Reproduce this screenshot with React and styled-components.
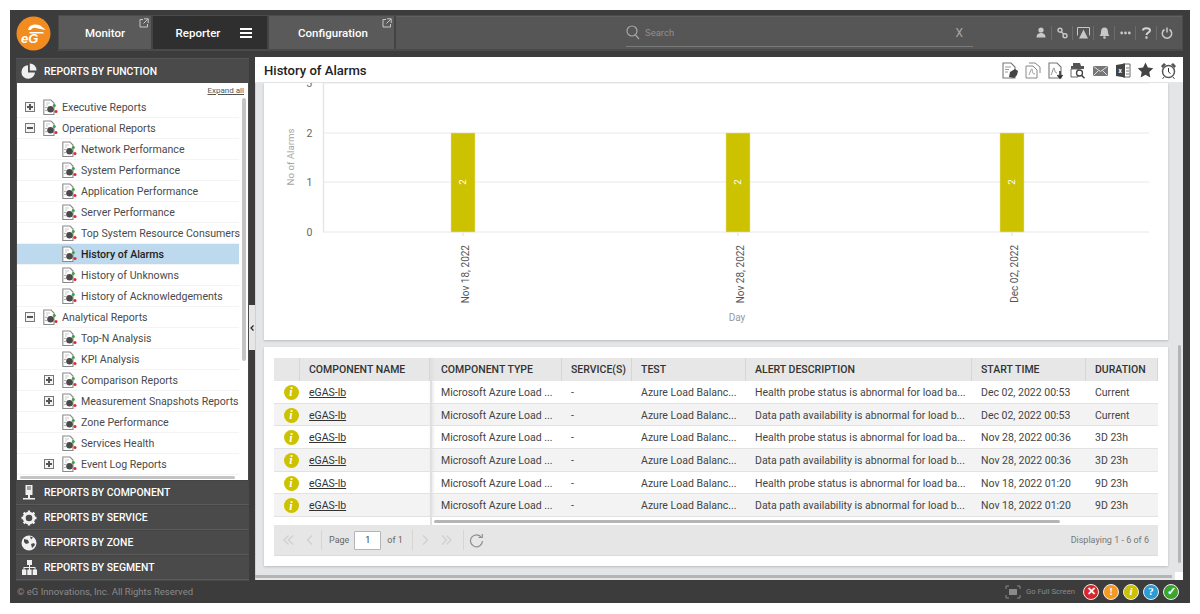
import React from 'react';
import styled, { createGlobalStyle } from 'styled-components';

const Global = createGlobalStyle`
  html, body { margin: 0; padding: 0; background: #fff; }
  body { font-family: Roboto, "Liberation Sans", sans-serif; }
  * { box-sizing: border-box; }
`;

const Page = styled.div`
  width: 1200px; height: 614px; padding: 10px 10px 11px; background: #fff; overflow: hidden;
`;
const Frame = styled.div`
  width: 1180px; height: 593px; background: #3c3c3c; display: flex; flex-direction: column;
  padding: 5px 7px 0 6px;
`;
const TopRow = styled.header`
  height: 36px; display: flex; align-items: center; flex: none;
`;
const LogoWrap = styled.div`
  width: 42px; flex: none; display: flex; align-items: center; margin-top: 1px;
  svg { display: block; }
`;
const NavBar = styled.nav`
  flex: 1; height: 36px; background: #565656; display: flex; align-items: stretch;
  border: 1px solid #4b4b4b; border-bottom: 2px solid #4a4a4a; box-shadow: inset 0 1px 0 #606060;
`;
const Tab = styled.div`
  position: relative; width: ${p => p.$w}px; display: flex; align-items: center; justify-content: center;
  gap: 20px; color: #fff; font-size: 11.5px; font-weight: 500; padding-left: ${p => p.$pl || 0}px;
  background: ${p => p.$active ? '#2f2f2f' : '#5a5a5a'};
  border-right: 2px solid #444;
`;
const ExtIcon = styled.span`
  position: absolute; top: 2px; right: 2px; line-height: 0;
`;
const SearchBox = styled.div`
  width: 347px; height: 26px; margin: 5px 0 0 230px; border-bottom: 1px solid #7a7a7a;
  display: flex; align-items: center; padding: 0 10px 2px 0; color: #9a9a9a;
`;
const SearchText = styled.span`
  flex: 1; font-size: 9.5px; color: #8f8f8f; padding-left: 5px;
`;
const SearchClear = styled.span`
  font-size: 12px; color: #a8a8a8;
`;
const TopIcons = styled.div`
  margin-left: auto; display: flex; align-items: center; padding-right: 5px;
`;
const TopIcon = styled.span`
  width: 21px; height: 14px; display: flex; align-items: center; justify-content: center;
  border-left: ${p => p.$first ? 'none' : '1px solid #6c6c6c'};
`;
const Body = styled.div`
  flex: 1; min-height: 0; display: flex; padding-top: 7px;
`;
const Side = styled.aside`
  width: 233px; flex: none; display: flex; flex-direction: column; height: 523px; background: #4a4a4a;
`;
const SideHead = styled.div`
  height: 25px; flex: none; display: flex; align-items: center; padding-left: 5px; gap: 7px;
  color: #fff; font-size: 10.4px; font-weight: 500; background: #4a4a4a;
  border-top: 1px solid #555; white-space: nowrap;
  svg { flex: none; }
`;
const Tree = styled.div`
  height: 397px; flex: none; margin: 0 1px; background: #fff; position: relative; overflow: hidden;
  padding-top: 14px;
`;
const ExpandAll = styled.a`
  position: absolute; right: 4px; top: 3px; font-size: 8px; color: #555; text-decoration: underline;
`;
const Row = styled.div`
  height: 21px; width: 222px; display: flex; align-items: center; position: relative;
  padding-left: ${p => p.$level === 0 ? 26 : 45}px; gap: 4px;
  font-size: 10.6px; white-space: nowrap; font-weight: ${p => p.$sel ? 500 : 400};
  color: ${p => p.$sel ? '#222' : '#4a4a4a'};
  background: ${p => p.$sel ? '#bcd9ee' : '#fff'};
  border-bottom: 1px solid #f4f4f4;
`;
const Toggle = styled.span`
  position: absolute; left: ${p => p.$level === 0 ? 8 : 27}px; top: 5px; width: 10px; height: 10px;
  border: 1px solid #777; background: #f4f4f4; line-height: 0;
  &::before { content: ''; position: absolute; left: 1px; right: 1px; top: 3px; height: 2px; background: #555; }
  &::after { content: ''; display: ${p => p.$open ? 'none' : 'block'}; position: absolute; top: 1px; bottom: 1px; left: 3px; width: 2px; background: #555; }
`;
const VScroll = styled.div`
  position: absolute; left: 225px; top: 15px; width: 4px; height: 263px; background: #c4c4c4; border-radius: 2px;
`;
const HScroll = styled.div`
  position: absolute; left: 3px; bottom: 1px; width: 215px; height: 3px; background: #c4c4c4; border-radius: 2px;
`;
const Acc = styled.div`
  height: 25px; flex: none; display: flex; align-items: center; padding-left: 5px; gap: 7px;
  color: #fff; font-size: 10.4px; font-weight: 500; background: #4a4a4a; white-space: nowrap;
  border-bottom: 1px solid #5a5a5a; border-top: 1px solid #444;
`;
const AccIcon = styled.span`
  width: 16px; height: 16px; display: flex; align-items: center; justify-content: center; flex: none;
`;
const Collapser = styled.div`
  width: 6px; flex: none; position: relative;
`;
const CollapseTab = styled.div`
  position: absolute; left: 0; top: 247px; width: 6px; height: 45px; background: #e6e6e6;
  display: flex; align-items: center; justify-content: center;
`;
const Main = styled.main`
  width: 928px; height: 523px; flex: none; background: #e4e5e6; display: flex; flex-direction: column; margin-top: -1px;
`;
const TitleBar = styled.div`
  height: 26px; flex: none; background: #fff; display: flex; align-items: center; padding: 1px 5px 0 9px;
  border-bottom: 1px solid #e6e6e6;
`;
const Title = styled.h1`
  margin: 0; font-size: 13.1px; font-weight: 500; color: #222; flex: 1;
`;
const Tools = styled.div`
  display: flex; align-items: center; gap: 3.7px;
  span { display: block; }
`;
const Scroller = styled.div`
  flex: 1; min-height: 0; display: flex; padding: 0 0 0 9px; position: relative;
`;
const Cards = styled.div`
  width: 904px; display: flex; flex-direction: column; gap: 7px;
`;
const ChartCard = styled.section`
  height: 257px; background: #fff; flex: none; box-shadow: 0 1px 2px #bbb;
  svg { display: block; }
`;
const TableCard = styled.section`
  height: 219px; background: #fff; padding: 11px 10px 10px; flex: none; box-shadow: 0 1px 2px #bbb;
`;
const Grid = styled.div`
  height: 198px; display: flex; flex-direction: column; position: relative;
`;
const cols = '26px 130px 2px 130px 70px 114px 226px 114px 72px';
const HeadRow = styled.div`
  height: 23px; flex: none; display: grid; grid-template-columns: ${cols}; background: #e7e7e7;
`;
const HeadCell = styled.div`
  font-size: 10.5px; font-weight: 500; color: #333; display: flex; align-items: center; padding-left: 9px;
  white-space: nowrap; overflow: hidden;
  border-right: 1px solid #d6d6d6;
`;
const DataRow = styled.div`
  height: 22.7px; flex: none; display: grid; grid-template-columns: ${cols};
  background: ${p => p.$alt ? '#f3f3f3' : '#fff'};
  border-bottom: 1px solid #e2e2e2;
`;
const Cell = styled.div`
  font-size: 10.5px; color: #444; display: flex; align-items: center; padding: 1px 0 0 9px;
  white-space: nowrap; overflow: hidden;
`;
const IconCell = styled.div`
  display: flex; align-items: center; justify-content: center; padding: 1px 0 0 8px;
`;
const Lock = styled.div`
  background: #e0e0e0; box-shadow: 1px 0 3px #ddd;
`;
const CompLink = styled.a`
  color: #333; text-decoration: underline;
`;
const Filler = styled.div`
  flex: 1; display: flex; background: #fff; position: relative;
`;
const TableScroll = styled.div`
  position: absolute; left: 160px; top: 3px; width: 626px; height: 3px; background: #b5b5b5; border-radius: 2px;
`;
const LockLine = styled.div`
  position: absolute; left: 156px; top: 0; bottom: 0; width: 2px; background: #e0e0e0;
`;
const Pager = styled.div`
  height: 31px; flex: none; background: #e6e6e6; display: flex; align-items: center; padding: 0 9px 0 4px;
  border-bottom: 1px solid #dcdcdc; font-size: 9px; color: #666;
`;
const PagerGlyph = styled.span`
  width: 21px; display: flex; justify-content: center;
`;
const PagerSep = styled.span`
  width: 1px; height: 20px; background: #d5d5d5; margin: 0 ${p => p.$r}px 0 ${p => p.$l}px;
`;
const PageInput = styled.span`
  width: 27px; height: 19px; border: 1px solid #b5b5b5; background: #fff; margin: 0 6px 0 5px;
  display: flex; align-items: center; justify-content: center; color: #333; border-radius: 1px;
`;
const PagerInfo = styled.span`
  margin-left: auto; color: #777;
`;
const RightRail = styled.div`
  width: 15px; flex: none; position: relative;
`;
const VBar = styled.div`
  position: absolute; right: 2px; top: 262px; width: 3px; height: 218px; background: #b5b5b5; border-radius: 2px;
`;
const BottomScroll = styled.div`
  position: absolute; left: 0; right: 11px; bottom: 2px; height: 3px; background: #b5b5b5;
`;
const RailWhite = styled.div`
  position: absolute; right: 0; bottom: 0; width: 8px; height: 8px; background: #fff;
`;
const LeftLine = styled.div`
  position: absolute; left: 0; top: 0; bottom: 0; width: 1px; background: #d0d0d0;
`;
const Footer = styled.footer`
  height: 23px; flex: none; display: flex; align-items: center; margin: 0 0 0 1px; padding-right: 4px;
  color: #8c8c8c;
`;
const Copy = styled.span`
  flex: 1; font-size: 9.5px; color: #8a8a8a;
`;
const FullScreen = styled.span`
  display: flex; align-items: center; gap: 5px; font-size: 7.7px; color: #8a8a8a; margin-right: 8px;
`;
const Statuses = styled.div`
  display: flex; gap: 4px;
`;
const Status = styled.span`
  width: 16px; height: 16px; border-radius: 50%; background: ${p => p.$c}; border: 1px solid #eee;
  color: #fff; font-size: 11px; font-weight: 700; display: flex; align-items: center; justify-content: center;
  font-style: ${p => p.$it ? 'italic' : 'normal'}; font-family: "Liberation Serif", serif;
  line-height: 1;
`;
const InfoDot = styled.span`
  width: 15px; height: 15px; border-radius: 50%; background: #cdc200; color: #fff; font-size: 12px;
  font-family: "Liberation Serif", serif; font-style: italic; font-weight: 700;
  display: flex; align-items: center; justify-content: center; line-height: 1;
`;

const Logo = () => (
  <svg width="35" height="35" viewBox="0 0 35 35">
    <circle cx="17.5" cy="17.5" r="17" fill="#f28c1e" />
    <path d="M12 14 C13 8 22 7 26 11 L30 14 L22 12.5 C19 11 16 11.5 15 14 Z" fill="#fff" />
    <path d="M13 16 L27 16 L28 17.5 L14 17.5 Z" fill="#fff" />
    <text x="5" y="27" fontFamily="Liberation Sans, sans-serif" fontSize="13" fontWeight="700" fontStyle="italic" fill="#fff">eG</text>
  </svg>
);
const Ext = () => (
  <svg width="10" height="10" viewBox="0 0 10 10" fill="none" stroke="#c8c8c8" strokeWidth="1">
    <path d="M4 1.5H1v7.5h7.500V6" /><path d="M5 .8h4.200V5M9 1 4.500 5.500" />
  </svg>
);
const Burger = () => (
  <svg width="12" height="10" viewBox="0 0 12 10" fill="#fff"><rect width="12" height="2" /><rect y="4" width="12" height="2" /><rect y="8" width="12" height="2" /></svg>
);
const SearchIcon = () => (
  <svg width="14" height="15" viewBox="0 0 14 15" fill="none" stroke="#a6a6a6" strokeWidth="1.200"><circle cx="6" cy="6" r="5" /><path d="M9.500 10l3.500 4" /></svg>
);
const ReportIcon = () => (
  <svg width="15" height="17" viewBox="0 0 15 17" style={{ flex: 'none' }}>
    <path d="M.8 1h7.200l3 3v11.500H.8z" fill="#fff" stroke="#8a8a8a" strokeWidth="1.100" />
    <path d="M3 4h4M3 6h2" stroke="#bbb" strokeWidth=".8" />
    <circle cx="7.500" cy="10.300" r="3.300" fill="#4a4a4a" />
    <circle cx="11.300" cy="6.500" r="1.500" fill="#3ea33e" />
    <circle cx="13" cy="12.500" r="1.500" fill="#d92b2b" />
    <circle cx="3" cy="8.500" r=".8" fill="#999" /><circle cx="3" cy="11.500" r=".8" fill="#999" />
  </svg>
);
const Chev = ({ dbl, right }) => (
  <svg width="13" height="12" viewBox="0 0 13 12" fill="none" stroke="#d0d0d0" strokeWidth="1.300" style={right ? { transform: 'scaleX(-1)' } : undefined}>
    <path d={dbl ? 'M6.500 1.500L2 6l4.500 4.500M11 1.500L6.500 6l4.500 4.500' : 'M9 1.500L4.500 6 9 10.500'} />
  </svg>
);

const G = '#f0f0f0';
const tops = [
  <svg width="10" height="11" viewBox="0 0 10 11" fill="#c8c8c8"><circle cx="5" cy="3" r="2.600" /><path d="M.5 10.500C.5 7 3 6 5 6s4.500 1 4.500 4.500z" /></svg>,
  <svg width="11" height="12" viewBox="0 0 11 12" fill="none" stroke="#c8c8c8" strokeWidth="1.400"><circle cx="3" cy="3.200" r="2" /><circle cx="8" cy="8.800" r="2" /><path d="M4.200 4.800l2.600 2.400" /></svg>,
  <svg width="13" height="12" viewBox="0 0 13 12" fill="#c8c8c8"><path d="M.5 .5h12v8" fill="none" stroke="#c8c8c8" /><path d="M.5 .5v8" stroke="#c8c8c8" /><path d="M6.500 2.500L11 11.500H2z" /></svg>,
  <svg width="11" height="12" viewBox="0 0 11 12" fill="#c8c8c8"><path d="M5.500 .5c2.500 0 3.500 2 3.500 4.500s1.500 4 1.500 4H.5s1.500-1.500 1.500-4S3 .5 5.500 .5z" /><circle cx="5.500" cy="10.500" r="1.300" /></svg>,
  <svg width="11" height="4" viewBox="0 0 11 4" fill="#c8c8c8"><circle cx="1.700" cy="2" r="1.400" /><circle cx="5.500" cy="2" r="1.400" /><circle cx="9.300" cy="2" r="1.400" /></svg>,
  <svg width="9" height="12" viewBox="0 0 9 12" fill="none" stroke="#d4d4d4" strokeWidth="2"><path d="M1 3.500C1 .5 8 .5 8 3.500 8 5.500 4.500 5.500 4.500 8" /><path d="M4.500 9.300v2.400" /></svg>,
  <svg width="12" height="12" viewBox="0 0 12 12" fill="none" stroke="#c8c8c8" strokeWidth="1.500"><path d="M3.500 2.500a4.700 4.700 0 1 0 5 0" /><path d="M6 .5v5" /></svg>,
];

const TI = ({ children }) => <svg width="19" height="19" viewBox="0 0 19 19" style={{ display: 'block' }}>{children}</svg>;
const doc = <path d="M3 2h8l4 4v11H3z" fill="#fff" stroke="#777" strokeWidth="1.100" />;
const toolIcons = [
  <TI>{doc}<path d="M5 6h6M5 8.500h4M5 11h3" stroke="#999" /><path d="M9 16l1-5 5-3 3 2-1 4-3 3z" fill="#444" /></TI>,
  <TI><path d="M3 5h7l4 4v8H3z" fill="#fff" stroke="#888" /><path d="M6 2h6l5 4v6" fill="none" stroke="#888" /><path d="M6 14c2-5 2-6 3-6s-1 5 3 5" fill="none" stroke="#999" /></TI>,
  <TI>{doc}<path d="M5 14c2-4 2-7 3-7s0 5 3 5" fill="none" stroke="#888" /><path d="M14 10v6M11.500 14l2.500 3 2.500-3" stroke="#333" strokeWidth="1.600" fill="none" /></TI>,
  <TI><path d="M5 2h7l1 3h3v3H3V5h2z" fill="#555" /><path d="M3 8h7v8H3z" fill="#fff" stroke="#666" /><circle cx="11.500" cy="12" r="3" fill="#fff" stroke="#444" strokeWidth="1.300" /><path d="M13.500 14.200l3 3" stroke="#444" strokeWidth="1.600" /></TI>,
  <TI><rect x="2" y="5" width="15" height="10" fill="#777" /><path d="M2.500 5.500l7 5 7-5M2.500 14.500l5-5M16.500 14.500l-5-5" fill="none" stroke="#ddd" /></TI>,
  <TI><path d="M9 3h7v13H9z" fill="#fff" stroke="#666" /><path d="M2 4l9-1.500v14L2 15z" fill="#444" /><text x="4.500" y="12" fontSize="6.500" fill="#fff" fontWeight="700" fontFamily="Roboto">x</text><path d="M12 7h3M12 10h3M12 13h3" stroke="#777" /></TI>,
  <TI><path d="M9.500 1.500l2.400 5 5.400.7-4 3.800 1 5.400-4.800-2.700-4.800 2.700 1-5.400-4-3.800 5.400-.7z" fill="#444" /></TI>,
  <TI><circle cx="9.500" cy="10.500" r="6" fill="#fff" stroke="#555" strokeWidth="1.500" /><path d="M9.500 7v4l2 1.500" stroke="#333" fill="none" /><path d="M2 5l3-3 2 1.500L3.500 7zM17 5l-3-3-2 1.500L15.500 7z" fill="#555" /><path d="M5 16l-1.500 2M14 16l1.500 2" stroke="#555" /></TI>,
];

const tree = [
  [0, 'Executive Reports', 'plus'], [0, 'Operational Reports', 'minus'],
  [1, 'Network Performance'], [1, 'System Performance'], [1, 'Application Performance'],
  [1, 'Server Performance'], [1, 'Top System Resource Consumers'], [1, 'History of Alarms', null, true],
  [1, 'History of Unknowns'], [1, 'History of Acknowledgements'], [0, 'Analytical Reports', 'minus'],
  [1, 'Top-N Analysis'], [1, 'KPI Analysis'], [1, 'Comparison Reports', 'plus'],
  [1, 'Measurement Snapshots Reports', 'plus'], [1, 'Zone Performance'], [1, 'Services Health'],
  [1, 'Event Log Reports', 'plus'],
];

const rows = [
  ['Health probe status is abnormal for load ba...', 'Dec 02, 2022 00:53', 'Current'],
  ['Data path availability is abnormal for load b...', 'Dec 02, 2022 00:53', 'Current'],
  ['Health probe status is abnormal for load ba...', 'Nov 28, 2022 00:36', '3D 23h'],
  ['Data path availability is abnormal for load b...', 'Nov 28, 2022 00:36', '3D 23h'],
  ['Health probe status is abnormal for load ba...', 'Nov 18, 2022 01:20', '9D 23h'],
  ['Data path availability is abnormal for load b...', 'Nov 18, 2022 01:20', '9D 23h'],
];

const Chart = () => {
  const bars = [[199, 'Nov 18, 2022'], [474, 'Nov 28, 2022'], [748, 'Dec 02, 2022']];
  const ys = [[149, '0'], [99, '1'], [50, '2'], [0, '3']];
  return (
    <svg width="904" height="257" viewBox="0 0 904 257">
      <line x1="59.500" y1="0" x2="59.500" y2="149" stroke="#e6e6e6" strokeWidth="1.500" />
      {ys.map(([y, t]) => (
        <g key={t}>
          <line x1="59" x2="885" y1={y} y2={y} stroke="#e8e8e8" strokeWidth="1" />
          <text x="45.500" y={y + 4} textAnchor="middle" fontFamily="Roboto" fontSize="10.500" fill="#666">{t}</text>
        </g>
      ))}
      <text transform="translate(30,74) rotate(-90)" textAnchor="middle" fontFamily="Roboto" fontSize="9.700" fill="#a5a5a5">No of Alarms</text>
      {bars.map(([c, d]) => (
        <g key={d}>
          <rect x={c - 12} y="50" width="24" height="99" fill="#cdc200" stroke="#e6e3a0" strokeWidth=".5" />
          <text transform={`translate(${c + 3},99) rotate(-90)`} textAnchor="middle" fontFamily="Roboto" fontSize="9.500" fill="#fff">2</text>
          <line x1={c} x2={c} y1="150" y2="153" stroke="#ddd" />
          <text transform={`translate(${c + 5.500},162) rotate(-90)`} textAnchor="end" fontFamily="Roboto" fontSize="10" fill="#555">{d}</text>
        </g>
      ))}
      <text x="473" y="238" textAnchor="middle" fontFamily="Roboto" fontSize="10" fill="#999">Day</text>
    </svg>
  );
};

export default function App() {
  return (
    <Page>
      <Global />
      <Frame>
        <TopRow>
          <LogoWrap><Logo /></LogoWrap>
          <NavBar>
            <Tab $w={94}>Monitor<ExtIcon><Ext /></ExtIcon></Tab>
            <Tab $w={116} $active $pl={8}>Reporter<Burger /></Tab>
            <Tab $w={127} $pl={3}>Configuration<ExtIcon><Ext /></ExtIcon></Tab>
            <SearchBox>
              <SearchIcon />
              <SearchText>Search</SearchText>
              <SearchClear>X</SearchClear>
            </SearchBox>
            <TopIcons>
              {tops.map((ic, i) => <TopIcon key={i} $first={i === 0}>{ic}</TopIcon>)}
            </TopIcons>
          </NavBar>
        </TopRow>
        <Body>
          <Side>
            <SideHead>
              <svg width="16" height="16" viewBox="0 0 16 16" fill={G}>
                <path d="M7 2.200A6.800 6.800 0 1 0 14 9.500H7z" /><path d="M8.800 .5A6.800 6.800 0 0 1 15.500 7.500H8.800z" />
              </svg>
              REPORTS BY FUNCTION
            </SideHead>
            <Tree>
              <ExpandAll>Expand all</ExpandAll>
              {tree.map(([lv, label, tog, sel]) => (
                <Row key={label} $level={lv} $sel={sel}>
                  {tog && <Toggle $level={lv} $open={tog === 'minus'} />}
                  <ReportIcon />{label}
                </Row>
              ))}
              <VScroll />
              <HScroll />
            </Tree>
            <Acc>
              <AccIcon><svg width="14" height="16" viewBox="0 0 14 16" fill={G}><rect x="3.500" y="0" width="7" height="10" /><path d="M5 2h4M5 4h4" stroke="#555" /><rect x="6" y="10" width="2" height="3" /><rect x="1" y="13" width="12" height="1.500" /></svg></AccIcon>
              REPORTS BY COMPONENT
            </Acc>
            <Acc>
              <AccIcon><svg width="16" height="16" viewBox="0 0 16 16"><circle cx="8" cy="8" r="4.800" fill="none" stroke={G} strokeWidth="3" /><path d="M8 .5v3M8 12.500v3M.5 8h3M12.500 8h3M2.700 2.700l2.100 2.100M11.200 11.200l2.100 2.100M13.300 2.700l-2.100 2.100M4.800 11.200l-2.100 2.100" stroke={G} strokeWidth="2.400" /></svg></AccIcon>
              REPORTS BY SERVICE
            </Acc>
            <Acc>
              <AccIcon><svg width="16" height="16" viewBox="0 0 16 16"><circle cx="8" cy="8" r="7.500" fill={G} /><path d="M3 4l4 1 1 3-3 1-2-2zM10 9l3-1 1 2-3 3zM9 1.500l3 1-2 2z" fill="#4a4a4a" /></svg></AccIcon>
              REPORTS BY ZONE
            </Acc>
            <Acc>
              <AccIcon><svg width="15" height="15" viewBox="0 0 15 15" fill={G}><rect x="5" y="0" width="5" height="5" /><rect x="0" y="9.500" width="4.300" height="5.500" /><rect x="5.300" y="9.500" width="4.300" height="5.500" /><rect x="10.700" y="9.500" width="4.300" height="5.500" /><path d="M7 5h1v2h5.500v3h-1V8H8v2H7V8H2.500v2h-1V7H7z" /></svg></AccIcon>
              REPORTS BY SEGMENT
            </Acc>
          </Side>
          <Collapser>
            <CollapseTab>
              <svg width="4" height="6" viewBox="0 0 4 6" fill="none" stroke="#222" strokeWidth="1.200"><path d="M3.500 .5L1 3l2.500 2.500" /></svg>
            </CollapseTab>
          </Collapser>
          <Main>
            <TitleBar>
              <Title>History of Alarms</Title>
              <Tools>{toolIcons.map((t, i) => <span key={i}>{t}</span>)}</Tools>
            </TitleBar>
            <Scroller>
              <LeftLine />
              <Cards>
                <ChartCard><Chart /></ChartCard>
                <TableCard>
                  <Grid>
                    <HeadRow>
                      <HeadCell />
                      <HeadCell>COMPONENT NAME</HeadCell>
                      <Lock />
                      <HeadCell>COMPONENT TYPE</HeadCell>
                      <HeadCell>SERVICE(S)</HeadCell>
                      <HeadCell>TEST</HeadCell>
                      <HeadCell>ALERT DESCRIPTION</HeadCell>
                      <HeadCell>START TIME</HeadCell>
                      <HeadCell>DURATION</HeadCell>
                    </HeadRow>
                    {rows.map((r, i) => (
                      <DataRow key={i} $alt={i % 2 === 1}>
                        <IconCell><InfoDot>i</InfoDot></IconCell>
                        <Cell><CompLink>eGAS-lb</CompLink></Cell>
                        <Lock />
                        <Cell>Microsoft Azure Load ...</Cell>
                        <Cell>-</Cell>
                        <Cell>Azure Load Balanc...</Cell>
                        <Cell>{r[0]}</Cell>
                        <Cell>{r[1]}</Cell>
                        <Cell>{r[2]}</Cell>
                      </DataRow>
                    ))}
                    <Filler><LockLine /><TableScroll /></Filler>
                    <Pager>
                      <PagerGlyph><Chev dbl /></PagerGlyph><PagerGlyph><Chev /></PagerGlyph>
                      <PagerSep $l={1} $r={7} />
                      Page
                      <PageInput>1</PageInput>
                      of 1
                      <PagerSep $l={9} $r={2} />
                      <PagerGlyph><Chev right /></PagerGlyph><PagerGlyph><Chev dbl right /></PagerGlyph>
                      <PagerSep $l={6} $r={5} />
                      <svg width="15" height="15" viewBox="0 0 15 15" fill="none" stroke="#8f8f8f" strokeWidth="1.200"><path d="M12.500 4.500A6 6 0 1 0 13.500 8" /><path d="M9.500 4.500h3.800V1" /></svg>
                      <PagerInfo>Displaying 1 - 6 of 6</PagerInfo>
                    </Pager>
                  </Grid>
                </TableCard>
              </Cards>
              <RightRail />
              <VBar />
              <BottomScroll />
              <RailWhite />
            </Scroller>
          </Main>
        </Body>
        <Footer>
          <Copy>© eG Innovations, Inc. All Rights Reserved</Copy>
          <FullScreen>
            <svg width="16" height="14" viewBox="0 0 16 14" fill="none" stroke="#8a8a8a"><path d="M1 4V1h3M12 1h3v3M15 10v3h-3M4 13H1v-3" /><rect x="4" y="4" width="8" height="6" fill="#8a8a8a" stroke="none" /></svg>
            Go Full Screen
          </FullScreen>
          <Statuses>
            <Status $c="#d9262c">✕</Status>
            <Status $c="#f39a1f">!</Status>
            <Status $c="#cdc200" $it>i</Status>
            <Status $c="#2c9bd6">?</Status>
            <Status $c="#3aa62f">✓</Status>
          </Statuses>
        </Footer>
      </Frame>
    </Page>
  );
}
